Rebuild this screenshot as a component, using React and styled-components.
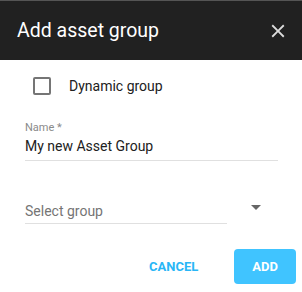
import styled, { createGlobalStyle } from "styled-components";

const GlobalStyle = createGlobalStyle`
  html, body {
    margin: 0;
    padding: 0;
    background: #fff;
  }
  * {
    box-sizing: border-box;
  }
`;

function App() {
  return (
    <>
      <GlobalStyle />
      <Dialogo>
        <Cabecera>
          <Titulo>Add asset group</Titulo>
          <BotonCerrar aria-label="close">
            <svg width="22" height="22" viewBox="0 0 24 24">
              <path
                fill="currentColor"
                d="M19 6.41L17.59 5 12 10.59 6.41 5 5 6.41 10.59 12 5 17.59 6.41 19 12 13.41 17.59 19 19 17.59 13.41 12z"
              />
            </svg>
          </BotonCerrar>
        </Cabecera>

        <FilaCheck>
          <Casilla />
          <TextoCheck>Dynamic group</TextoCheck>
        </FilaCheck>

        <Campo>
          <Etiqueta>Name *</Etiqueta>
          <Entrada>My new Asset Group</Entrada>
        </Campo>

        <FilaSelect>
          <Selector>Select group</Selector>
          <Flecha />
        </FilaSelect>

        <Acciones>
          <Boton>CANCEL</Boton>
          <Boton $relleno>ADD</Boton>
        </Acciones>
      </Dialogo>
    </>
  );
}

const Dialogo = styled.div`
  width: 302px;
  height: 292px;
  background: #fff;
  font-family: Roboto, "Liberation Sans", sans-serif;
`;

const Cabecera = styled.div`
  height: 60px;
  background: #212121;
  border-top: 1px solid #555;
  display: flex;
  align-items: center;
  justify-content: space-between;
  padding: 0 13px 0 17px;
`;

const Titulo = styled.h2`
  margin: 0;
  font-size: 19.5px;
  font-weight: 400;
  color: #fff;
`;

const BotonCerrar = styled.button`
  border: none;
  background: none;
  padding: 0;
  color: #ddd;
  display: flex;
`;

const FilaCheck = styled.div`
  display: flex;
  align-items: center;
  gap: 18px;
  padding: 17px 0 0 33px;
`;

const Casilla = styled.span`
  width: 18px;
  height: 18px;
  border: 2px solid #757575;
  border-radius: 2px;
`;

const TextoCheck = styled.span`
  font-size: 14px;
  color: #212121;
`;

const Campo = styled.div`
  padding: 26px 24px 0 25px;
`;

const Etiqueta = styled.div`
  font-size: 11px;
  line-height: 13px;
  color: #8a8a8a;
  margin-bottom: 2px;
`;

const Entrada = styled.div`
  font-size: 14px;
  line-height: 20px;
  color: #212121;
  padding-bottom: 4px;
  border-bottom: 1px solid #e0e0e0;
`;

const FilaSelect = styled.div`
  display: flex;
  align-items: flex-start;
  padding: 40px 0 0 25px;
`;

const Selector = styled.div`
  width: 202px;
  font-size: 14px;
  line-height: 20px;
  color: #757575;
  padding-bottom: 2px;
  border-bottom: 1px solid #e0e0e0;
`;

const Flecha = styled.span`
  margin: 4px 0 0 24px;
  width: 0;
  height: 0;
  border-left: 5px solid transparent;
  border-right: 5px solid transparent;
  border-top: 5px solid #666;
`;

const Acciones = styled.div`
  display: flex;
  justify-content: flex-end;
  gap: 18px;
  padding: 25px 6px 0 0;
`;

const Boton = styled.button`
  height: 35px;
  padding: 0 18px;
  border: none;
  border-radius: 4px;
  font-family: Roboto, "Liberation Sans", sans-serif;
  font-size: 13px;
  font-weight: 700;
  color: ${(p) => (p.$relleno ? "#fff" : "#29b6f6")};
  background: ${(p) => (p.$relleno ? "#40c4ff" : "transparent")};
`;

export default App;
